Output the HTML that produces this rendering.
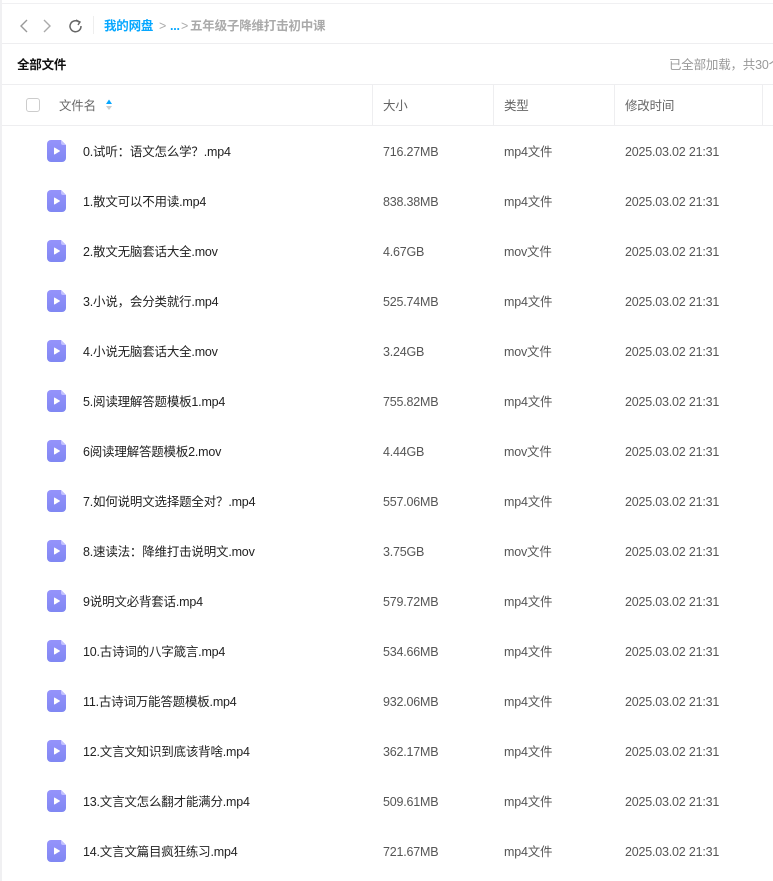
<!DOCTYPE html>
<html><head><meta charset="utf-8"><style>
*{margin:0;padding:0;box-sizing:border-box}
body{width:773px;height:881px;overflow:hidden;background:#fff;font-family:"Liberation Sans","Noto Sans CJK SC",sans-serif;position:relative;color:#333}
.lb{position:absolute;left:0;top:0;width:2px;height:881px;background:#f0f0f2}
.tb{position:absolute;left:0;top:3px;width:773px;height:1px;background:#f0f0f2}
.l{position:absolute;height:1px;background:#eeeef0;left:2px;right:0}
.v{position:absolute;width:1px;background:#eeeef0;top:84px;height:42px}
.t{position:absolute;font-size:12.5px;letter-spacing:-0.2px;white-space:nowrap;line-height:16px}
.ic{position:absolute;left:47px;width:19px;height:22px}
</style></head><body>
<div class="lb"></div><div class="tb"></div>
<svg style="position:absolute;left:18px;top:17px" width="70" height="18">
<path d="M9 3 L3 9 L9 15" fill="none" stroke="#999" stroke-width="1.4"/>
<path d="M26 3 L32 9 L26 15" fill="none" stroke="#aaa" stroke-width="1.4"/>
<path d="M61 5 A5.5 5.5 0 1 0 63 9" fill="none" stroke="#666" stroke-width="1.5"/>
<path d="M58 3 L62 5 L60 8" fill="none" stroke="#666" stroke-width="1.4"/>
</svg>
<div style="position:absolute;left:93px;top:16px;width:1px;height:18px;background:#eee"></div>
<div class="t" style="left:104px;top:18px;font-weight:bold;color:#06a7ff">我的网盘</div>
<div class="t" style="left:159px;top:18px;color:#aaa">&gt;</div>
<div class="t" style="left:170px;top:18px;color:#06a7ff;font-weight:bold">...</div>
<div class="t" style="left:181px;top:18px;color:#aaa">&gt;</div>
<div class="t" style="left:190px;top:18px;color:#aaa;font-weight:bold">五年级子降维打击初中课</div>
<div class="l" style="top:43px"></div>
<div class="t" style="left:17px;top:57px;font-weight:bold;color:#111">全部文件</div>
<div class="t" style="left:669px;top:57px;color:#999">已全部加载，共30个</div>
<div class="l" style="top:84px"></div>
<div class="l" style="top:125px"></div>
<div class="v" style="left:372px"></div><div class="v" style="left:493px"></div><div class="v" style="left:614px"></div><div class="v" style="left:762px"></div>
<div style="position:absolute;left:26px;top:98px;width:14px;height:14px;border:1px solid #ccc;border-radius:3px"></div>
<div class="t" style="left:59px;top:98px;color:#666">文件名</div>
<svg style="position:absolute;left:105px;top:98px" width="8" height="14"><path d="M4 1.5 L7 6 L1 6Z" fill="#06a7ff"/><path d="M4 12 L7 8 L1 8Z" fill="#ccc"/></svg>
<div class="t" style="left:383px;top:98px;color:#666">大小</div>
<div class="t" style="left:504px;top:98px;color:#666">类型</div>
<div class="t" style="left:625px;top:98px;color:#666">修改时间</div>
<div id="rows"></div>
<script>
var d=[["0.试听：语文怎么学？.mp4","716.27MB","mp4"],["1.散文可以不用读.mp4","838.38MB","mp4"],["2.散文无脑套话大全.mov","4.67GB","mov"],["3.小说，会分类就行.mp4","525.74MB","mp4"],["4.小说无脑套话大全.mov","3.24GB","mov"],["5.阅读理解答题模板1.mp4","755.82MB","mp4"],["6阅读理解答题模板2.mov","4.44GB","mov"],["7.如何说明文选择题全对？.mp4","557.06MB","mp4"],["8.速读法：降维打击说明文.mov","3.75GB","mov"],["9说明文必背套话.mp4","579.72MB","mp4"],["10.古诗词的八字箴言.mp4","534.66MB","mp4"],["11.古诗词万能答题模板.mp4","932.06MB","mp4"],["12.文言文知识到底该背啥.mp4","362.17MB","mp4"],["13.文言文怎么翻才能满分.mp4","509.61MB","mp4"],["14.文言文篇目疯狂练习.mp4","721.67MB","mp4"]];
var h="";
d.forEach(function(r,i){var y=151+i*50;
h+='<svg class="ic" style="top:'+(y-11)+'px" viewBox="0 0 19 22"><defs><linearGradient id="g'+i+'" x1="0" y1="0" x2="0" y2="1"><stop offset="0" stop-color="#9593fb"/><stop offset="1" stop-color="#8087f3"/></linearGradient></defs><path d="M4 0 H14 L19 5 V18 A4 4 0 0 1 15 22 H4 A4 4 0 0 1 0 18 V4 A4 4 0 0 1 4 0Z" fill="url(#g'+i+')"/><path d="M14 0 L19 5 H16 A2 2 0 0 1 14 3Z" fill="#c2c1fe"/><path d="M7.5 8 L12.5 11 L7.5 14Z" fill="#fff" stroke="#fff" stroke-width="1" stroke-linejoin="round"/></svg>';
h+='<div class="t" style="left:83px;top:'+(y-7)+'px;color:#222">'+r[0]+'</div>';
h+='<div class="t" style="left:383px;top:'+(y-7)+'px;color:#555">'+r[1]+'</div>';
h+='<div class="t" style="left:504px;top:'+(y-7)+'px;color:#555">'+r[2]+'文件</div>';
h+='<div class="t" style="left:625px;top:'+(y-7)+'px;color:#555">2025.03.02 21:31</div>';});
document.getElementById("rows").innerHTML=h;
</script>
</body></html>
